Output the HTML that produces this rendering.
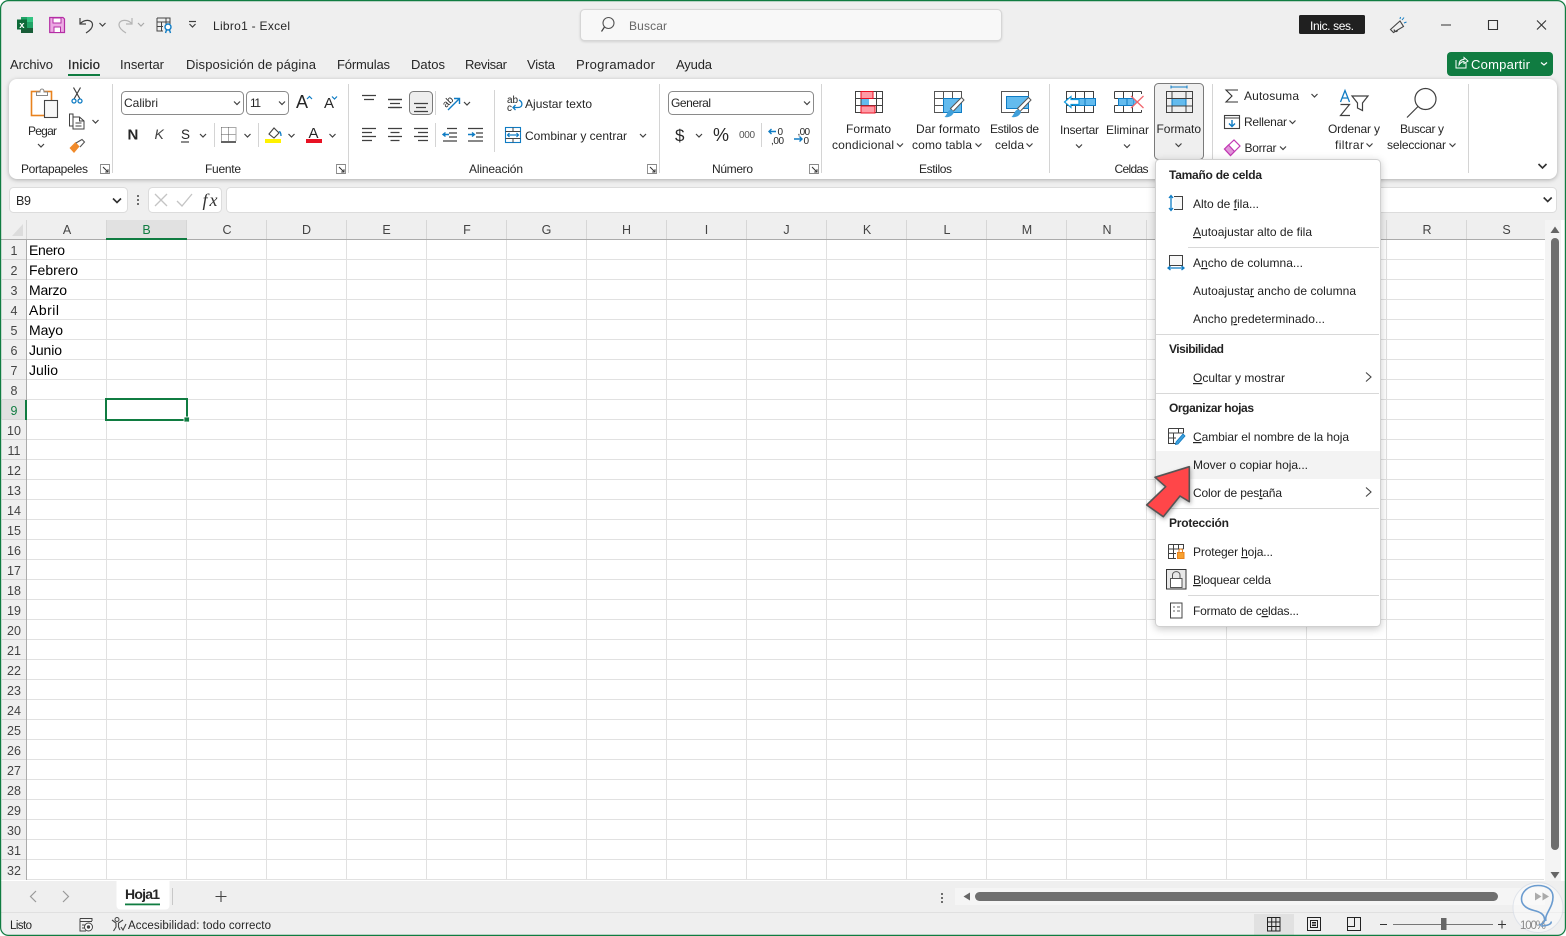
<!DOCTYPE html>
<html lang="es"><head><meta charset="utf-8"><title>Libro1 - Excel</title>
<style>
html,body{margin:0;padding:0;width:1566px;height:936px;overflow:hidden;background:#fff}
#g{position:absolute;left:27px;top:240px;width:1517px;height:640px;background-color:#fff;background-image:linear-gradient(to right,transparent 79px,#e1e1e1 79px),linear-gradient(to bottom,transparent 19px,#e1e1e1 19px);background-size:80px 20px}
svg{position:absolute;left:0;top:0}
text{font-family:"Liberation Sans",sans-serif;font-size:12px;fill:#262626}
.tab{font-size:13px}.h{font-size:12.5px;fill:#444}.c{font-size:14px;fill:#000}.b{font-weight:bold}
.m{font-size:12px;fill:#222}.u{text-decoration:underline}
.ln{stroke:#404040;stroke-width:1.2;fill:none}.sep{stroke:#d4d4d4;stroke-width:1}
.gr{fill:none;stroke:#404040;stroke-width:1.2}.bl{fill:#63bbee;stroke:#0f7cc4;stroke-width:1}
.mc{stroke:#d8d8d8;stroke-width:1}
</style></head><body>
<div id="g"></div>
<svg width="1566" height="936" viewBox="0 0 1566 936">
<defs>
<path id="c" d="M-3-1.5L0 1.5 3-1.5" fill="none" stroke="#404040" stroke-width="1.2"/>
<path id="cb" d="M-4-2L0 2 4-2" fill="none" stroke="#303030" stroke-width="1.600"/>
<g id="dl"><path d="M-4.5-4.5H4.5V4.5H-4.5Z" fill="none" stroke="#888" stroke-width=".9"/><path d="M-2-2L3 3M3 .2V3H.2" fill="none" stroke="#333" stroke-width="1"/></g>
</defs>
<!-- chrome background -->
<rect x="0" y="0" width="1566" height="220" fill="#efefef"/>
<rect x="0" y="881" width="1566" height="55" fill="#efefef"/>
<!-- title bar -->
<rect x="21" y="17" width="12" height="5.5" fill="#21a366"/><rect x="27" y="17" width="6" height="5.5" fill="#33c481"/><rect x="21" y="22" width="12" height="6" fill="#107c41"/><rect x="27" y="22" width="6" height="6" fill="#21a366"/><rect x="21" y="28" width="12" height="5" fill="#185c37"/>
<rect x="17" y="19.5" width="10" height="10" fill="#0d6b38"/><text x="19.3" y="28" style="font-size:9.5px;fill:#fff;font-weight:bold">x</text>
<path d="M49.7 17.5H63L64.5 19V32.5H49.7Z" fill="#ecaae3" stroke="#b52ea5" stroke-width="1.2"/><rect x="53" y="18" width="8" height="5" fill="#fff" stroke="#b52ea5"/><rect x="54" y="27" width="6.5" height="5.5" fill="#fff" stroke="#b52ea5"/>
<path d="M80 18V24H86M80 24C84 19 92.5 19 92.5 25 92.5 28 90 30.500 86 33" class="ln"/>
<use href="#c" x="102.500" y="24.500"/>
<path d="M132 18V24H126M132 24C128 19 119 19 119 25 119 28 122 30.500 126 33" fill="none" stroke="#b4b4b4" stroke-width="1.2"/>
<use href="#c" x="141" y="24.500" style="opacity:.4"/>
<path d="M157 18H170V24M157 18V31H163M157 22H170M161.500 22V31M166 18V24M157 26.500H163" fill="none" stroke="#444" stroke-width="1"/><circle cx="168" cy="27" r="3" fill="#fff" stroke="#0f7cc4" stroke-width="1.400"/><path d="M165.500 33L166.500 30M170.500 33L169.500 30" stroke="#0f7cc4" stroke-width="1.400"/>
<path d="M189 21.500H196" class="ln"/><use href="#c" x="192.500" y="25.500"/>
<text x="213" y="30" textLength="77">Libro1  -  Excel</text>
<rect x="580.500" y="9.500" width="421" height="31" rx="4" fill="#f8f8f8" stroke="#d6d6d6" style="filter:drop-shadow(0 1px 1px rgba(0,0,0,.12))"/>
<circle cx="608.500" cy="23" r="5.500" fill="none" stroke="#555" stroke-width="1.100"/><path d="M604.500 27L601.500 31.500" class="ln"/>
<text x="629" y="30" textLength="38" style="fill:#666">Buscar</text>
<rect x="1299" y="15" width="66" height="19" rx="1.500" fill="#202020"/>
<text x="1310" y="30" textLength="44" style="fill:#fff">Inic. ses.</text>
<path d="M1390.500 29.500L1400 21 1403.500 26.500 1393.500 32.500ZM1394 29.500C1394.500 32 1397 32 1397.500 30.500" fill="none" stroke="#444" stroke-width="1.100"/><path d="M1402 20L1404 17.500M1404 23L1406.500 22M1400 19L1400.500 17" fill="none" stroke="#0f7cc4" stroke-width="1"/>
<path d="M1441 25H1451M1488.500 20.500H1497.500V29.500H1488.500ZM1537 20.500L1546 29.500M1546 20.500L1537 29.500" fill="none" stroke="#333" stroke-width="1.100"/>
<!-- tabs -->
<text class="tab" x="10" y="69" textLength="43">Archivo</text>
<text class="tab b" x="68" y="69" textLength="32" style="font-weight:normal;stroke:#262626;stroke-width:.25">Inicio</text>
<rect x="68" y="74" width="32" height="2" fill="#107c41"/>
<text class="tab" x="120" y="69" textLength="44">Insertar</text>
<text class="tab" x="186" y="69" textLength="130">Disposición de página</text>
<text class="tab" x="337" y="69" textLength="53">Fórmulas</text>
<text class="tab" x="411" y="69" textLength="34">Datos</text>
<text class="tab" x="465" y="69" textLength="42">Revisar</text>
<text class="tab" x="527" y="69" textLength="28">Vista</text>
<text class="tab" x="576" y="69" textLength="79">Programador</text>
<text class="tab" x="676" y="69" textLength="36">Ayuda</text>
<rect x="1447" y="52" width="106" height="24" rx="4" fill="#107c41"/>
<path d="M1456 60V68H1466V63M1459 65C1459 61 1461 59.500 1464 59.500V57.500L1468 61 1464 63.500V61.500C1462 61.500 1460.500 62.500 1459 65Z" fill="none" stroke="#fff" stroke-width="1"/>
<text class="tab" x="1471" y="69" textLength="59" style="fill:#fff">Compartir</text>
<path d="M1541 62.500L1544 65 1547 62.500" fill="none" stroke="#fff" stroke-width="1.200"/>
<!-- ribbon -->
<rect x="9" y="79" width="1548" height="100" rx="8" fill="#fff" style="filter:drop-shadow(0 1px 2px rgba(0,0,0,.28))"/>
<g class="sep"><path d="M112.500 84V173M348.500 84V173M659.500 84V173M821.500 84V173M1049.500 84V173M1212.500 84V173M1468.500 84V173"/>
<path d="M214.500 123V147M258.500 123V147M435.500 91V115M435.500 123V147M494.500 90V152M761.500 123V147"/></g>
<!-- clipboard -->
<rect x="31.500" y="91.500" width="20" height="24" fill="#fff" stroke="#e8821e" stroke-width="1.600"/><path d="M36.500 95.500V92H40C40 88 44 88 44 92H47.500V95.500Z" fill="#fff" stroke="#888"/><rect x="44.500" y="100.500" width="13" height="17" fill="#f8f8f8" stroke="#444" stroke-width="1.100"/>
<path d="M73.500 87.500L80 99M80.500 87.500L74 99" class="ln"/><circle cx="74" cy="101" r="2" fill="none" stroke="#0f7cc4" stroke-width="1.300"/><circle cx="80" cy="101" r="2" fill="none" stroke="#0f7cc4" stroke-width="1.300"/>
<path d="M73 126V114H69.500V126ZM73 117H79.500L84 121V129H73ZM79.500 117V121H84M75.500 123H81.500M75.500 126H81.500" fill="#fff" stroke="#404040" stroke-width="1"/>
<use href="#c" x="95.500" y="121.500"/><use href="#c" x="41" y="145.500"/>
<path d="M69.500 148L75.500 142 79.500 146.500 74 153Z" fill="#f08a2a"/><path d="M76 143L82 139.500 84.500 142 80 147" fill="none" stroke="#555" stroke-width="1.100"/>
<text x="28" y="135" textLength="29">Pegar</text>
<text x="21" y="173" textLength="67">Portapapeles</text><use href="#dl" x="105" y="169"/>
<!-- font -->
<rect x="121.500" y="91.500" width="122" height="23" rx="4" fill="#fff" stroke="#8a8a8a"/><text x="124" y="107" textLength="34">Calibri</text><use href="#c" x="237" y="103"/>
<rect x="246.500" y="91.500" width="42" height="23" rx="4" fill="#fff" stroke="#8a8a8a"/><text x="250" y="107" textLength="11">11</text><use href="#c" x="282" y="103"/>
<text x="296" y="108" style="font-size:18px" textLength="12">A</text><path d="M307 99L309.500 96.500 312 99" fill="none" stroke="#0f7cc4" stroke-width="1.200"/>
<text x="324" y="108" style="font-size:15px" textLength="10">A</text><path d="M332 96.500L334.500 99 337 96.500" fill="none" stroke="#0f7cc4" stroke-width="1.200"/>
<text x="127.500" y="139.500" class="b" style="font-size:15px" textLength="11">N</text>
<text x="154.500" y="139" style="font-size:14px;font-style:italic;fill:#444">K</text>
<text x="181" y="139" style="font-size:13.500px">S</text><path d="M181 142H189" class="ln"/>
<use href="#c" x="203" y="135.500"/>
<path d="M221.500 127.500H236M221.500 127.500V141M236 127.500V141M228.500 127.500V141M221.500 134.500H236" fill="none" stroke="#555" stroke-width="1" stroke-dasharray="1 1"/><path d="M221 142H236" stroke="#111" stroke-width="1.300"/>
<use href="#c" x="247.500" y="135.500"/>
<path d="M269 134L274 128 279 133 274 138Z" fill="#fff" stroke="#444" stroke-width="1.100"/><path d="M279 132C280 131 281 133 281 136" fill="none" stroke="#0f7cc4" stroke-width="1.300"/><rect x="265" y="139" width="16" height="4" fill="#fff200"/>
<use href="#c" x="291.500" y="135.500"/>
<text x="308.500" y="138" style="font-size:15px" textLength="11">A</text><rect x="306" y="139" width="16" height="4" fill="#e81123"/>
<use href="#c" x="332.500" y="135.500"/>
<text x="205" y="173" textLength="36">Fuente</text><use href="#dl" x="341" y="169"/>
<!-- alignment -->
<rect x="409.500" y="91.500" width="23" height="23" rx="4" fill="#eeeeee" stroke="#7a7a7a"/>
<g class="ln"><path d="M362 95.500H376M364 99.500H374M388 99.500H402M390 103.500H400M390 107.500H400M414 103.500H428M416 107.500H426M414 111.500H428"/><path d="M388 99.500H402M388 107.500H402"/>
<path d="M362 128.500H376M362 132.500H372M362 136.500H376M362 140.500H372M388 128.500H402M390.500 132.500H399.500M388 136.500H402M390.500 140.500H399.500M414 128.500H428M418 132.500H428M414 136.500H428M418 140.500H428"/>
<path d="M447 128.500H457M449 133H457M449 137H457M443 141H457M468 128.500H483M476 133H483M476 137H483M468 141H483"/></g>
<path d="M443 134.500H449M445.500 132.500L443 134.500 445.500 136.500M468 134.500H474.500M472 132.500L474.500 134.500 472 136.500" fill="none" stroke="#0f7cc4" stroke-width="1.400"/>
<text x="442" y="104" transform="rotate(-45 449 101)" style="font-size:10px">ab</text><path d="M448 110L459 99M454 98.500H459.500V104" fill="none" stroke="#0f7cc4" stroke-width="1.400"/>
<use href="#c" x="467" y="103.500"/>
<text x="507" y="103" style="font-size:10px">ab</text><text x="507" y="111" style="font-size:10px">c</text><path d="M519 100C523 102 523 107.500 518 107.500H513M515.500 105L513 107.500 515.500 110" fill="none" stroke="#0f7cc4" stroke-width="1.300"/>
<text x="525" y="108" textLength="67">Ajustar texto</text>
<rect x="505.500" y="127.500" width="15" height="15" fill="#fff" stroke="#0f7cc4" stroke-width="1.100"/><path d="M505.500 131.500H520.500M505.500 138.500H520.500M513 127.500V131.500M513 138.500V142.500" stroke="#444" fill="none"/><path d="M507.500 135H518.500M509.500 133L507.500 135 509.500 137M516.500 133L518.500 135 516.500 137" fill="none" stroke="#0f7cc4" stroke-width="1.200"/>
<text x="525" y="140" textLength="102">Combinar y centrar</text><use href="#c" x="643" y="135.500"/>
<text x="469" y="173" textLength="54">Alineación</text><use href="#dl" x="652" y="169"/>
<!-- number -->
<rect x="668.500" y="91.500" width="145" height="23" rx="4" fill="#fff" stroke="#8a8a8a"/><text x="671" y="107" textLength="40">General</text><use href="#c" x="807" y="103"/>
<text x="675" y="141" style="font-size:17px" textLength="10">$</text><use href="#c" x="699" y="135.500"/>
<text x="713" y="141" style="font-size:18px" textLength="16">%</text>
<text x="739" y="138" style="font-size:10px;fill:#555" textLength="16">000</text>
<path d="M776 131.500H769M771.500 129L769 131.500 771.500 134" fill="none" stroke="#0f7cc4" stroke-width="1.400"/><text x="777.500" y="135" style="font-size:10px">0</text><text x="771" y="144" style="font-size:10px" textLength="13">,00</text>
<text x="797.500" y="135" style="font-size:10px" textLength="12.500">,00</text><path d="M794 139H802M799.500 136.500L802 139 799.500 141.500" fill="none" stroke="#0f7cc4" stroke-width="1.400"/><text x="803.500" y="144" style="font-size:10px">0</text>
<text x="712" y="173" textLength="41">Número</text><use href="#dl" x="814" y="169"/>
<!-- styles -->
<rect x="861" y="98.500" width="8" height="7.500" fill="#63bbee"/>
<path d="M855.500 91.500H882.500V112.500H855.500ZM855.500 98.500H882.500M855.500 105.500H882.500M861 91.500V112.500M876.500 91.500V112.500" class="gr" style="stroke-width:1"/>
<rect x="861" y="91.500" width="12" height="7" fill="#ff9aa5" stroke="#e81123"/><rect x="861" y="106" width="14" height="7" fill="#ff9aa5" stroke="#e81123"/>
<text x="846" y="133" textLength="45">Formato</text><text x="832" y="149" textLength="62">condicional</text><use href="#c" x="900" y="145"/>
<path d="M934.500 91.500H961.500V112.500H934.500ZM934.500 98.500H961.500M934.500 105.500H961.500M943.500 91.500V112.500M952.500 91.500V112.500" class="gr" style="stroke-width:1;stroke:#555"/>
<rect x="943.500" y="98.500" width="18" height="14" class="bl"/>
<path d="M950.500 108.500L961.500 97.500 964 100 953 111.500Z" fill="#fff" stroke="#555"/><path d="M951 109.500C947.500 110 948 113.500 944.500 117 949 118 953.500 115.500 954 111.500Z" fill="#3f9fda"/>
<text x="916" y="133" textLength="64">Dar formato</text><text x="912" y="149" textLength="60">como tabla</text><use href="#c" x="978.500" y="145"/>
<path d="M1001.500 91.500H1028.500V112.500H1001.500ZM1001.500 91.500V112.500" class="gr" style="stroke-width:1;stroke:#555"/>
<rect x="1006.500" y="96.500" width="22" height="12" class="bl"/>
<path d="M1017.500 108.500L1028.500 97.500 1031 100 1020 111.500Z" fill="#fff" stroke="#555"/><path d="M1018 109.500C1014.500 110 1015 113.500 1011.500 117 1016 118 1020.500 115.500 1021 111.500Z" fill="#3f9fda"/>
<text x="990" y="133" textLength="49">Estilos de</text><text x="995" y="149" textLength="29">celda</text><use href="#c" x="1029.500" y="145"/>
<text x="919" y="173" textLength="33">Estilos</text>
<!-- cells -->
<path d="M1066.500 91.500H1093.500V112.500H1066.500ZM1066.500 98.500H1093.500M1066.500 105.500H1093.500M1075.500 91.500V112.500M1084.500 91.500V112.500" class="gr" style="stroke-width:1"/>
<rect x="1073.500" y="98.500" width="22" height="7" class="bl"/><path d="M1085 98.500V105.500" stroke="#0f7cc4"/>
<path d="M1064.500 102L1071 96.500V99.500H1079V104.500H1071V107.500Z" fill="#fff" stroke="#0f9be0" stroke-width="1.200"/>
<text x="1060" y="134" textLength="39">Insertar</text><use href="#c" x="1079" y="146"/>
<path d="M1114.500 91.500H1141.500M1114.500 112.500H1141.500M1114.500 91.500V98.500M1114.500 105.500V112.500M1141.500 91.500V94M1141.500 110V112.500M1114.500 98.500H1125M1114.500 105.500H1125M1123.500 91.500V98.500M1123.500 105.500V112.500M1132.500 91.500V98.500M1132.500 105.500V112.500" class="gr" style="stroke-width:1"/>
<rect x="1118.500" y="98.500" width="15" height="7" class="bl"/><path d="M1127 98.500V105.500" stroke="#0f7cc4"/><path d="M1133.500 98.500L1137 102 1133.500 105.500Z" fill="#63bbee"/>
<path d="M1131 96L1143.500 108M1143.500 96L1131 108" stroke="#f0676e" stroke-width="1.300" fill="none"/>
<text x="1106" y="134" textLength="43">Eliminar</text><use href="#c" x="1127" y="146"/>
<rect x="1154.500" y="83.500" width="49" height="76" rx="4" fill="#efefef" stroke="#7a7a7a"/>
<path d="M1171 87H1187M1171 85.500V88.500M1187 85.500V88.500" stroke="#0f7cc4" fill="none"/>
<rect x="1172" y="98.500" width="14" height="7.500" fill="#63bbee" stroke="#0f7cc4"/>
<path d="M1166.500 91.500H1192.500V112.500H1166.500ZM1166.500 98.500H1172M1186 98.500H1192.500M1166.500 106H1172M1186 106H1192.500M1172 91.500V98.500M1186 91.500V98.500M1172 106V112.500M1186 106V112.500M1172 98.500H1186M1172 106H1186" class="gr" style="stroke-width:1"/>
<text x="1156.500" y="133" textLength="44.500">Formato</text><use href="#c" x="1178.500" y="145"/>
<text x="1114.500" y="173" textLength="34">Celdas</text>
<!-- editing -->
<path d="M1238 90H1226L1232 96 1226 102H1238" fill="none" stroke="#333" stroke-width="1.100"/>
<text x="1244" y="100" textLength="55">Autosuma</text><use href="#c" x="1314.500" y="95.500"/>
<rect x="1224.500" y="115.500" width="15" height="13" fill="#fff" stroke="#404040" stroke-width="1.100"/><path d="M1224.500 118H1239.500" stroke="#404040"/><path d="M1232 120V126M1229 123.500L1232 126.500 1235 123.500" fill="none" stroke="#0f7cc4" stroke-width="1.400"/>
<text x="1244" y="126" textLength="43">Rellenar</text><use href="#c" x="1292.500" y="122"/>
<path d="M1224.500 149L1234 140 1240 146 1230.500 155.500Z" fill="#fff" stroke="#c239b3" stroke-width="1.200"/><path d="M1224.500 149L1228.500 145 1234.500 151.500 1230.500 155.500Z" fill="#e195d9" stroke="#c239b3" stroke-width="1.200"/>
<text x="1244.500" y="152" textLength="32">Borrar</text><use href="#c" x="1283" y="148"/>
<path d="M1340.500 102L1345 90.500 1349.500 102M1342 98H1348" fill="none" stroke="#0f7cc4" stroke-width="1.300"/>
<path d="M1340.500 104.500H1349.500L1340.500 115.500H1350" fill="none" stroke="#404040" stroke-width="1.200"/>
<path d="M1352 96H1368L1362.500 103V110.500L1357.500 108V103Z" fill="#fff" stroke="#404040" stroke-width="1.200"/>
<text x="1328" y="133" textLength="52">Ordenar y</text><text x="1335" y="149" textLength="29">filtrar</text><use href="#c" x="1369.500" y="145"/>
<circle cx="1425.500" cy="99" r="10.500" fill="none" stroke="#404040" stroke-width="1.200"/><path d="M1418 106.500L1407 117.500" class="ln"/>
<text x="1400" y="133" textLength="44">Buscar y</text><text x="1387" y="149" textLength="59">seleccionar</text><use href="#c" x="1452.500" y="145"/>
<use href="#cb" x="1542.500" y="166"/>
<!-- formula bar -->
<rect x="9.500" y="187.500" width="118" height="25" rx="4" fill="#fff" stroke="#dcdcdc"/>
<text x="16" y="205" style="font-size:12.500px" textLength="15">B9</text>
<use href="#cb" x="117" y="200.500"/>
<circle cx="138" cy="196" r="1" fill="#444"/><circle cx="138" cy="200" r="1" fill="#444"/><circle cx="138" cy="204" r="1" fill="#444"/>
<rect x="148.500" y="187.500" width="73" height="25" rx="4" fill="#fff" stroke="#dcdcdc"/>
<path d="M155 194L167 206M167 194L155 206M177 201L182 206 192 194" fill="none" stroke="#c4c4c4" stroke-width="1.300"/>
<text x="202.500" y="206" style="font-family:'Liberation Serif',serif;font-size:18px;font-style:italic;fill:#333" textLength="15">fx</text>
<rect x="226.500" y="187.500" width="1330" height="25" rx="4" fill="#fff" stroke="#dcdcdc"/>
<use href="#cb" x="1547.700" y="199.500"/>
<!-- headers -->
<rect x="0" y="220" width="1545" height="19.500" fill="#efefef"/>
<rect x="0" y="240" width="26" height="640" fill="#efefef"/>
<path d="M23 224V236H12Z" fill="#dcdcdc"/>
<rect x="106" y="220" width="81" height="19" fill="#e1e1e1"/>
<rect x="0" y="400" width="26" height="19.500" fill="#e1e1e1"/>
<path d="M26.500 220V240M106.500 220V239M186.500 220V239M266.500 220V239M346.500 220V239M426.500 220V239M506.500 220V239M586.500 220V239M666.500 220V239M746.500 220V239M826.500 220V239M906.500 220V239M986.500 220V239M1066.500 220V239M1146.500 220V239M1226.500 220V239M1306.500 220V239M1386.500 220V239M1466.500 220V239" stroke="#d6d6d6"/>
<path d="M2 259.500H26M2 279.500H26M2 299.500H26M2 319.500H26M2 339.500H26M2 359.500H26M2 379.500H26M2 399.500H26M2 419.500H26M2 439.500H26M2 459.500H26M2 479.500H26M2 499.500H26M2 519.500H26M2 539.500H26M2 559.500H26M2 579.500H26M2 599.500H26M2 619.500H26M2 639.500H26M2 659.500H26M2 679.500H26M2 699.500H26M2 719.500H26M2 739.500H26M2 759.500H26M2 779.500H26M2 799.500H26M2 819.500H26M2 839.500H26M2 859.500H26" stroke="#d6d6d6"/>
<path d="M0 239.500H1545" stroke="#ababab"/><path d="M26.500 239V880" stroke="#ababab"/>
<rect x="106" y="238" width="81" height="2" fill="#107c41"/><rect x="25" y="400" width="2" height="20" fill="#107c41"/>
<g class="h" text-anchor="middle">
<text class="h" x="67" y="234">A</text><text class="h" x="146.500" y="234" style="fill:#107c41">B</text><text class="h" x="227" y="234">C</text><text class="h" x="306.500" y="234">D</text><text class="h" x="386.500" y="234">E</text><text class="h" x="467" y="234">F</text><text class="h" x="546.500" y="234">G</text><text class="h" x="626.500" y="234">H</text><text class="h" x="706.500" y="234">I</text><text class="h" x="786.500" y="234">J</text><text class="h" x="867" y="234">K</text><text class="h" x="947" y="234">L</text><text class="h" x="1027" y="234">M</text><text class="h" x="1107" y="234">N</text><text class="h" x="1427" y="234">R</text><text class="h" x="1506.500" y="234">S</text>
<text class="h" x="14" y="255">1</text><text class="h" x="14" y="275">2</text><text class="h" x="14" y="295">3</text><text class="h" x="14" y="315">4</text><text class="h" x="14" y="335">5</text><text class="h" x="14" y="355">6</text><text class="h" x="14" y="375">7</text><text class="h" x="14" y="395">8</text><text class="h" x="14" y="415" style="fill:#107c41">9</text><text class="h" x="14" y="435">10</text><text class="h" x="14" y="455">11</text><text class="h" x="14" y="475">12</text><text class="h" x="14" y="495">13</text><text class="h" x="14" y="515">14</text><text class="h" x="14" y="535">15</text><text class="h" x="14" y="555">16</text><text class="h" x="14" y="575">17</text><text class="h" x="14" y="595">18</text><text class="h" x="14" y="615">19</text><text class="h" x="14" y="635">20</text><text class="h" x="14" y="655">21</text><text class="h" x="14" y="675">22</text><text class="h" x="14" y="695">23</text><text class="h" x="14" y="715">24</text><text class="h" x="14" y="735">25</text><text class="h" x="14" y="755">26</text><text class="h" x="14" y="775">27</text><text class="h" x="14" y="795">28</text><text class="h" x="14" y="815">29</text><text class="h" x="14" y="835">30</text><text class="h" x="14" y="855">31</text><text class="h" x="14" y="875">32</text>
</g>
<text class="c" x="29" y="255" textLength="36">Enero</text><text class="c" x="29" y="275" textLength="49">Febrero</text><text class="c" x="29" y="295" textLength="38">Marzo</text><text class="c" x="29" y="315" textLength="30">Abril</text><text class="c" x="29" y="335" textLength="34">Mayo</text><text class="c" x="29" y="355" textLength="33">Junio</text><text class="c" x="29" y="375" textLength="29">Julio</text>
<rect x="106" y="399" width="81" height="21" fill="none" stroke="#107c41" stroke-width="2"/>
<rect x="184" y="417" width="5.500" height="5" fill="#107c41" stroke="#fff" stroke-width=".8"/>
<!-- scrollbars -->
<rect x="1545" y="220" width="16" height="661" fill="#f4f4f4"/>
<path d="M1550.500 233L1555 226.500 1559.500 233Z" fill="#666"/><path d="M1550.500 872L1555 878.500 1559.500 872Z" fill="#666"/>
<rect x="1551" y="238" width="8" height="612" rx="4" fill="#6f6f6f"/>
<!-- sheet tabs -->
<path d="M116.500 881V905Q116.500 909.500 121 909.500H165Q169.500 909.500 169.500 905V881Z" fill="#fff"/>
<text x="125" y="899" class="b" style="font-size:14px" textLength="35">Hoja1</text><rect x="125" y="903.500" width="35" height="1.800" fill="#107c41"/>
<path d="M172.500 888V905" stroke="#c8c8c8"/>
<path d="M36 891L30.500 896.500 36 902M63 891L68.500 896.500 63 902" fill="none" stroke="#999" stroke-width="1.200"/>
<path d="M221 891V902M215.500 896.500H226.500" stroke="#444" stroke-width="1.100"/>
<circle cx="942" cy="894" r="1" fill="#444"/><circle cx="942" cy="898" r="1" fill="#444"/><circle cx="942" cy="902" r="1" fill="#444"/>
<rect x="955" y="888" width="590" height="17" fill="#f5f5f5"/>
<path d="M970 892.500L963.500 896.500 970 900.500Z" fill="#666"/>
<rect x="975" y="892" width="523" height="9" rx="4.500" fill="#6f6f6f"/>
<path d="M1535 892.500L1541.500 896.500 1535 900.500Z" fill="#666"/>
<!-- status -->
<path d="M0 912.500H1566" stroke="#e0e0e0"/>
<text x="10" y="929" textLength="22" style="font-size:11.500px">Listo</text>
<path d="M80 918.500H92V921M80 918.500V931H86M80 921.500H92M82 925H85M82 928H85" fill="none" stroke="#444"/><circle cx="88.500" cy="927" r="4" fill="#fff" stroke="#444"/><circle cx="88.500" cy="927" r="1.700" fill="#444"/>
<circle cx="117" cy="919.500" r="2" fill="none" stroke="#444"/><path d="M112 920L116 923V927L113.500 931M123 920L118.500 923V927L120 930M121 927L123 930 126 924" fill="none" stroke="#444" stroke-width="1.100"/>
<text x="128" y="929" textLength="143" style="font-size:11.500px">Accesibilidad: todo correcto</text>
<rect x="1254" y="914" width="40" height="21" fill="#e1e1e1"/>
<path d="M1267.500 917.500H1280V931H1267.500ZM1267.500 922H1280M1267.500 926.500H1280M1271.700 917.500V931M1275.900 917.500V931" fill="none" stroke="#222"/>
<path d="M1307.500 917.500H1320.500V930.500H1307.500ZM1310.500 920.500H1317.500V927.500H1310.500ZM1312 922.500H1316M1312 924H1316M1312 925.500H1316" fill="none" stroke="#222"/>
<path d="M1347.500 917.500H1360.500V930.500H1347.500ZM1347.500 926.500H1354.500V917.500" fill="none" stroke="#222"/>
<path d="M1380 924.500H1387M1498 924.500H1506M1502 920.500V928.500" stroke="#333"/><path d="M1393 924.500H1493" stroke="#777"/>
<rect x="1441" y="918" width="5.500" height="12" fill="#666"/>
<!-- window border -->
<path d="M0 0H8Q0 0 0 8ZM1566 0H1558Q1566 0 1566 8ZM0 936H8Q0 936 0 928ZM1566 936H1558Q1566 936 1566 928Z" fill="#fff"/>
<rect x=".6" y=".6" width="1564.800" height="934.800" rx="8" fill="none" stroke="#107c41" stroke-width="1.200"/>
<!-- watermark -->
<circle cx="1538" cy="907.500" r="25" fill="#fff" fill-opacity=".45" stroke="#d5dce6" stroke-opacity=".7"/>
<text x="1520" y="929" textLength="26" style="fill:#8a8a8a;font-size:11.500px">100%</text>
<path d="M1542.500 892.500L1549 896.500 1542.500 900.500Z" fill="#aaa"/>
<path d="M1546 921C1544 914 1553 908 1553 897 1553 889 1546 885.500 1538 885.500 1528 885.500 1521.500 892 1521.500 899 1521.500 906 1528 909 1534 910.500 1540 912 1544 914 1544.500 919 1545 923 1541 924.500 1539 925M1541 926C1547 926 1552 924 1551 921.500" fill="none" stroke="#6a9bcf" stroke-width="1.600"/>
<!-- menu -->
<rect x="1155.500" y="159.500" width="225" height="467" rx="4" fill="#fff" stroke="#d0d0d0" style="filter:drop-shadow(0 2px 4px rgba(0,0,0,.22))"/>
<rect x="1156" y="451" width="224" height="28" fill="#f3f3f3"/>
<path class="mc" d="M1188 247.500H1379M1156 334.500H1379M1156 393.500H1379M1156 508.500H1379M1188 595.500H1379"/>
<text class="m b" x="1169" y="179" textLength="93">Tamaño de celda</text>
<text class="m" x="1193" y="208" textLength="66">Alto de <tspan class="u">f</tspan>ila...</text>
<text class="m" x="1193" y="236" textLength="119"><tspan class="u">A</tspan>utoajustar alto de fila</text>
<text class="m" x="1193" y="267" textLength="110">A<tspan class="u">n</tspan>cho de columna...</text>
<text class="m" x="1193" y="295" textLength="163">Autoajusta<tspan class="u">r</tspan> ancho de columna</text>
<text class="m" x="1193" y="323" textLength="132">Ancho <tspan class="u">p</tspan>redeterminado...</text>
<text class="m b" x="1169" y="353" textLength="55">Visibilidad</text>
<text class="m" x="1193" y="382" textLength="92"><tspan class="u">O</tspan>cultar y mostrar</text>
<text class="m b" x="1169" y="412" textLength="85">Organizar hojas</text>
<text class="m" x="1193" y="441" textLength="156"><tspan class="u">C</tspan>ambiar el nombre de la hoja</text>
<text class="m" x="1193" y="469" textLength="115">Mover o copiar hoja...</text>
<text class="m" x="1193" y="497" textLength="89">Color de pes<tspan class="u">t</tspan>aña</text>
<text class="m b" x="1169" y="527" textLength="60">Protección</text>
<text class="m" x="1193" y="556" textLength="80">Proteger <tspan class="u">h</tspan>oja...</text>
<text class="m" x="1193" y="584" textLength="78"><tspan class="u">B</tspan>loquear celda</text>
<text class="m" x="1193" y="615" textLength="106">Formato de c<tspan class="u">e</tspan>ldas...</text>
<path d="M1366 372.500L1371 377 1366 381.500M1366 487.500L1371 492 1366 496.500" fill="none" stroke="#444" stroke-width="1.100"/>
<path d="M1171 196V210M1169 198L1171 195.500 1173 198M1169 208L1171 210.500 1173 208" fill="none" stroke="#0f7cc4" stroke-width="1.300"/><path d="M1174 196.500H1182.500V209.500H1174" fill="#f8f8f8" stroke="#404040"/>
<rect x="1169.500" y="255.500" width="13" height="10" fill="#f8f8f8" stroke="#404040"/><path d="M1168 268H1184M1170.500 266L1168 268 1170.500 270M1181.500 266L1184 268 1181.500 270" fill="none" stroke="#0f7cc4" stroke-width="1.300"/>
<path d="M1168.500 428.500H1183.500V433M1168.500 428.500V443.500H1176M1168.500 433H1183.500M1168.500 438H1176M1173.500 433V443.500M1178.500 428.500V433" fill="none" stroke="#404040"/><path d="M1176 442L1183 434 1185 436 1178 444 1175.500 444.500Z" fill="#3f9fda" stroke="#0f7cc4" stroke-width=".8"/>
<path d="M1168.500 544.500H1183.500V549M1168.500 544.500V558.500H1176M1168.500 549H1183.500M1168.500 553.500H1176M1173.500 544.500V558.500M1178.500 544.500V549" fill="none" stroke="#404040"/><rect x="1177.500" y="552.500" width="6.500" height="6" fill="#f7a12f" stroke="#e8821e"/><path d="M1179 552.500V550.500C1179 548.500 1182.500 548.500 1182.500 550.500V552.500" fill="none" stroke="#e8821e"/>
<rect x="1166.500" y="569.500" width="19.500" height="19.500" fill="#e8e8e8" stroke="#333"/><rect x="1170.500" y="578.500" width="11.500" height="9" fill="#fff" stroke="#555"/><path d="M1172.500 578.500V575C1172.500 570.500 1180 570.500 1180 575V578.500" fill="none" stroke="#555"/>
<rect x="1170.500" y="603" width="11.500" height="15" fill="#fff" stroke="#444"/><path d="M1173 607H1175M1177 607H1180M1173 611H1175M1177 611H1180" stroke="#666"/>
<!-- red arrow -->
<path d="M1189.300 466.700L1155 477.300 1165.700 486.700 1146.700 505 1163.300 516.700 1180 496 1189.300 501.700Z" fill="#ff4649" stroke="#555" stroke-width="1.600" stroke-linejoin="round" style="filter:drop-shadow(1px 2px 2px rgba(0,0,0,.3))"/>
</svg>
</body></html>
